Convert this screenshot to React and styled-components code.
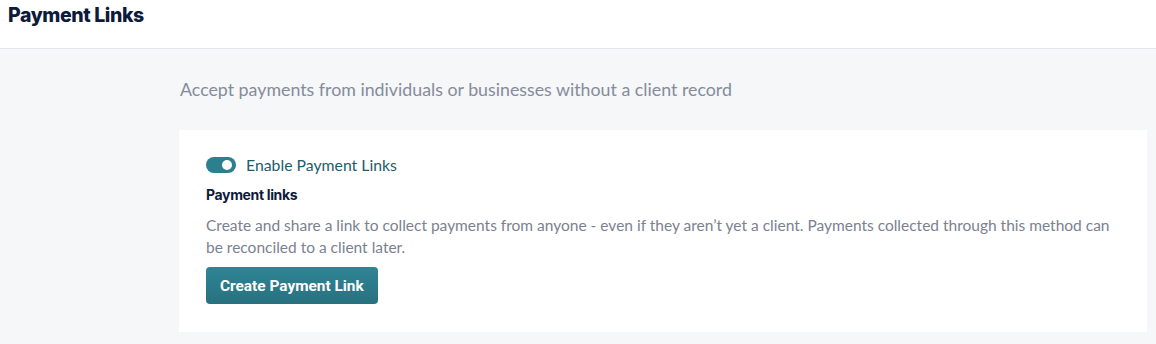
import React, { useState } from "react";
import styled, { createGlobalStyle } from "styled-components";

const GlobalStyle = createGlobalStyle`
  html, body {
    margin: 0;
    padding: 0;
    background: #f6f7f9;
  }
  * { box-sizing: border-box; }
`;

const Page = styled.div`
  width: 1156px;
  height: 344px;
  display: flex;
  flex-direction: column;
  background: #f6f7f9;
`;

const Header = styled.header`
  height: 49px;
  background: #ffffff;
  border-bottom: 1px solid #e3e5e9;
  padding: 3px 8px 0;
`;

const Title = styled.h1`
  margin: 0;
  font-family: Inter, "Liberation Sans", sans-serif;
  font-size: 19.5px;
  font-weight: 800;
  letter-spacing: -0.4px;
  color: #0d1a3a;
  line-height: 24px;
`;

const Content = styled.main`
  padding: 27px 9px 0 179px;
  display: flex;
  flex-direction: column;
`;

const Intro = styled.p`
  margin: 0 0 28px 1px;
  font-family: Lato, "Liberation Sans", sans-serif;
  font-size: 17.8px;
  color: #858b9b;
  line-height: 26px;
`;

const Card = styled.section`
  background: #ffffff;
  padding: 25px 27px 28px;
  display: flex;
  flex-direction: column;
  align-items: flex-start;
`;

const ToggleRow = styled.label`
  display: flex;
  align-items: center;
  gap: 10px;
  cursor: pointer;
  font-family: Lato, "Liberation Sans", sans-serif;
  font-size: 15.8px;
  color: #1f5c6a;
  line-height: 20px;
`;

const Track = styled.span`
  position: relative;
  width: 30px;
  height: 16px;
  border-radius: 8px;
  background: ${(p) => (p.$on ? "#2b7f8e" : "#c5c9d1")};
  &:after {
    content: "";
    position: absolute;
    top: 3px;
    left: ${(p) => (p.$on ? "16px" : "3px")};
    width: 10px;
    height: 10px;
    border-radius: 50%;
    background: #ffffff;
  }
`;

const SectionTitle = styled.h2`
  margin: 10px 0 0;
  font-family: Inter, "Liberation Sans", sans-serif;
  font-size: 14px;
  font-weight: 700;
  letter-spacing: -0.35px;
  color: #0d1a3a;
  line-height: 20px;
`;

const Description = styled.p`
  margin: 9px 0 0;
  font-family: Lato, "Liberation Sans", sans-serif;
  font-size: 15.5px;
  color: #7b8190;
  line-height: 22px;
  max-width: 930px;
`;

const Button = styled.button`
  margin-top: 9px;
  height: 37px;
  padding: 0 14px;
  border: none;
  border-radius: 4px;
  background: linear-gradient(#2f8494, #28717f);
  color: #ffffff;
  font-family: Roboto, "Liberation Sans", sans-serif;
  font-size: 15.4px;
  font-weight: 700;
  cursor: pointer;
`;

export default function App() {
  const [on, setOn] = useState(true);
  return (
    <Page>
      <GlobalStyle />
      <Header>
        <Title>Payment Links</Title>
      </Header>
      <Content>
        <Intro>Accept payments from individuals or businesses without a client record</Intro>
        <Card>
          <ToggleRow onClick={() => setOn(!on)}>
            <Track $on={on} />
            Enable Payment Links
          </ToggleRow>
          <SectionTitle>Payment links</SectionTitle>
          <Description>
            Create and share a link to collect payments from anyone - even if they aren’t yet a client. Payments collected through this method can be reconciled to a client later.
          </Description>
          <Button>Create Payment Link</Button>
        </Card>
      </Content>
    </Page>
  );
}
